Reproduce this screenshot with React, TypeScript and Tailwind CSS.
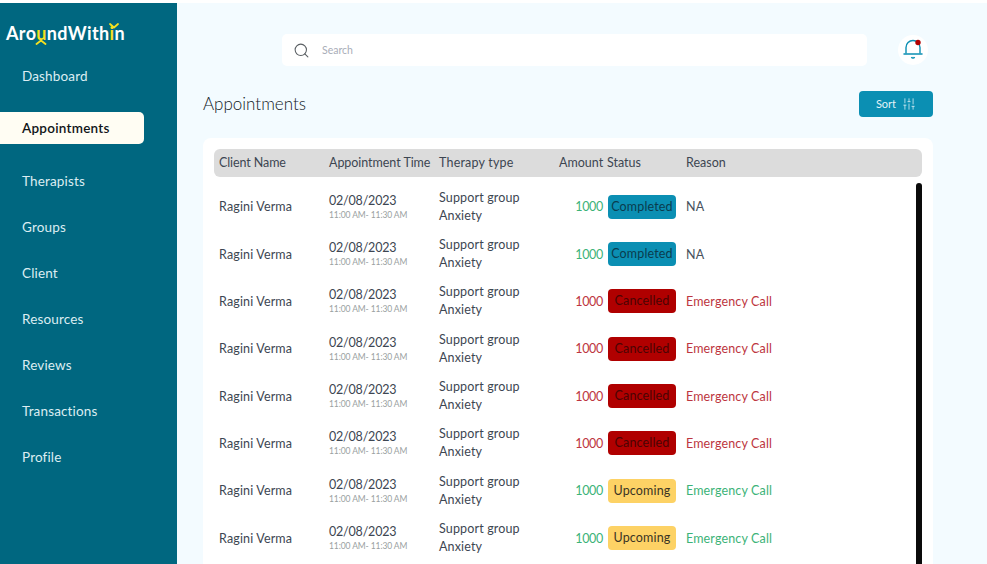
import { Search, SlidersVertical } from "lucide-react";

const navItems = ["Dashboard", "Appointments", "Therapists", "Groups", "Client", "Resources", "Reviews", "Transactions", "Profile"];

type Status = "Completed" | "Cancelled" | "Upcoming";

const rows: { status: Status; reason: string }[] = [
  { status: "Completed", reason: "NA" },
  { status: "Completed", reason: "NA" },
  { status: "Cancelled", reason: "Emergency Call" },
  { status: "Cancelled", reason: "Emergency Call" },
  { status: "Cancelled", reason: "Emergency Call" },
  { status: "Cancelled", reason: "Emergency Call" },
  { status: "Upcoming", reason: "Emergency Call" },
  { status: "Upcoming", reason: "Emergency Call" },
];

const badgeClass: Record<Status, string> = {
  Completed: "bg-[#0b8fb3] text-[#0a3c4e]",
  Cancelled: "bg-[#b00000] text-[#4a0404]",
  Upcoming: "bg-[#fdd265] text-[#3a3424]",
};

const amountClass: Record<Status, string> = {
  Completed: "text-[#3cb378]",
  Cancelled: "text-[#bd3540]",
  Upcoming: "text-[#3cb378]",
};

const reasonClass: Record<Status, string> = {
  Completed: "text-[#47525c]",
  Cancelled: "text-[#bd3540]",
  Upcoming: "text-[#3cb378]",
};

function Logo() {
  return (
    <div className="relative ml-[6px] mt-[17px] h-[26px] text-[18px] leading-[26px] font-bold tracking-[0.35px] text-white">
      Aro<span className="text-[#f5e020]">u</span>ndWith<span className="text-[#f5e020]">i</span>n
      <svg className="absolute left-[29px] top-[19px]" width="12" height="6" viewBox="0 0 12 6" fill="none">
        <path d="M1.5 5 L6 1.5 L10.5 5" stroke="#f5e020" strokeWidth="1.8" strokeLinecap="round" strokeLinejoin="round" />
      </svg>
      <svg className="absolute left-[103px] top-[3px]" width="10" height="6" viewBox="0 0 10 6" fill="none">
        <path d="M1 1 L5 4.5 L9 1" stroke="#f5e020" strokeWidth="1.8" strokeLinecap="round" strokeLinejoin="round" />
      </svg>
    </div>
  );
}

function Sidebar() {
  return (
    <aside className="w-[177px] shrink-0 bg-[#006780]">
      <Logo />
      <nav className="mt-[7px] flex flex-col">
        {navItems.map((item) =>
          item === "Appointments" ? (
            <a key={item} className="mb-[14px] mt-[13px] flex h-[32px] w-[144px] items-center rounded-r-[5px] bg-[#fffdf3] pl-[22px] text-[13.5px] font-semibold tracking-[0.25px] text-[#101418]">
              {item}
            </a>
          ) : (
            <a key={item} className="flex h-[46px] items-center pl-[22px] text-[13.5px] tracking-[0.15px] text-[#dcedf2]">
              {item}
            </a>
          )
        )}
      </nav>
    </aside>
  );
}

function Bell() {
  return (
    <div className="mb-[1px] flex h-[30px] w-[30px] items-center justify-center rounded-full bg-white">
      <svg width="20" height="24" viewBox="0 0 20 24" fill="none">
        <path d="M3 15.5 V9.5 a7 7 0 0 1 14 0 V15.5" stroke="#0b8fb3" strokeWidth="1.4" />
        <path d="M1 16 H19" stroke="#0b8fb3" strokeWidth="1.5" strokeLinecap="round" />
        <path d="M8.5 19 a1.6 1.6 0 0 0 3 0" stroke="#0b8fb3" strokeWidth="1.5" />
        <circle cx="15" cy="4.5" r="2.7" fill="#b00000" />
      </svg>
    </div>
  );
}

function Row({ status, reason }: { status: Status; reason: string }) {
  return (
    <div className="grid h-[47.33px] grid-cols-[110px_110px_106px_58px_83px_1fr] items-center pl-[5px] text-[12.5px] tracking-[0.15px] text-[#3d4652]">
      <div className="pt-[2px]">Ragini Verma</div>
      <div>
        <div className="text-[12.5px] leading-[17px] tracking-[-0.2px]">02/08/2023</div>
        <div className="text-[8.5px] leading-[13px] tracking-[-0.1px] text-[#9a9fa1]">11:00 AM- 11:30 AM</div>
      </div>
      <div className="leading-[18px]">
        <div>Support group</div>
        <div>Anxiety</div>
      </div>
      <div className={`pt-[2px] text-right tracking-[-0.3px] ${amountClass[status]}`}>1000</div>
      <div className="pl-[5px]">
        <span className={`flex h-[24px] w-[68px] items-center justify-center rounded-[4px] pt-[1px] ${badgeClass[status]}`}>{status}</span>
      </div>
      <div className={`pt-[2px] ${reasonClass[status]}`}>{reason}</div>
    </div>
  );
}

export default function App() {
  return (
    <div className="flex h-[564px] flex-col overflow-hidden bg-[#f3fbff] font-['Lato',sans-serif]">
      <div className="h-[3px] shrink-0 bg-white" />
      <div className="flex min-h-0 flex-1">
        <Sidebar />
        <main className="min-w-0 flex-1">
          <div className="ml-[105px] mr-[59px] mt-[31px] flex items-center justify-between">
            <div className="flex h-[32px] w-[585px] items-center rounded-[5px] bg-white pl-[11px]">
              <Search size={17} strokeWidth={1.5} className="text-[#5a5f63]" />
              <span className="ml-[12px] pt-[1px] text-[10.5px] text-[#a9adb8]">Search</span>
            </div>
            <Bell />
          </div>

          <div className="ml-[26px] mr-[54px] mt-[25px] flex items-center justify-between">
            <h1 className="text-[17px] font-light text-[#10181e]">Appointments</h1>
            <button className="flex h-[26px] w-[74px] items-center justify-center gap-[6px] rounded-[4px] bg-[#0b8fb3] text-[11px] text-[#e2f3f8]">
              Sort
              <SlidersVertical size={14} strokeWidth={1.3} />
            </button>
          </div>

          <section className="relative ml-[26px] mr-[54px] mt-[21px] h-[500px] rounded-[8px] bg-white px-[11px] pt-[11px]">
            <div className="grid h-[28px] grid-cols-[110px_110px_120px_44px_83px_1fr] items-center rounded-[6px] bg-[#dcdcdc] pl-[5px] pt-[1px] text-[12.5px] text-[#3d4652]">
              <div className="tracking-[-0.1px]">Client Name</div>
              <div className="tracking-[-0.05px]">Appointment Time</div>
              <div className="tracking-[0.2px]">Therapy type</div>
              <div className="text-right">Amount</div>
              <div className="pl-[4px]">Status</div>
              <div>Reason</div>
            </div>
            <div className="relative mt-[6px]">
              {rows.map((row, i) => (
                <Row key={i} status={row.status} reason={row.reason} />
              ))}
              <div className="absolute right-0 top-0 h-[500px] w-[6px] rounded-full bg-[#0a0a0a]" />
            </div>
          </section>
        </main>
      </div>
    </div>
  );
}
